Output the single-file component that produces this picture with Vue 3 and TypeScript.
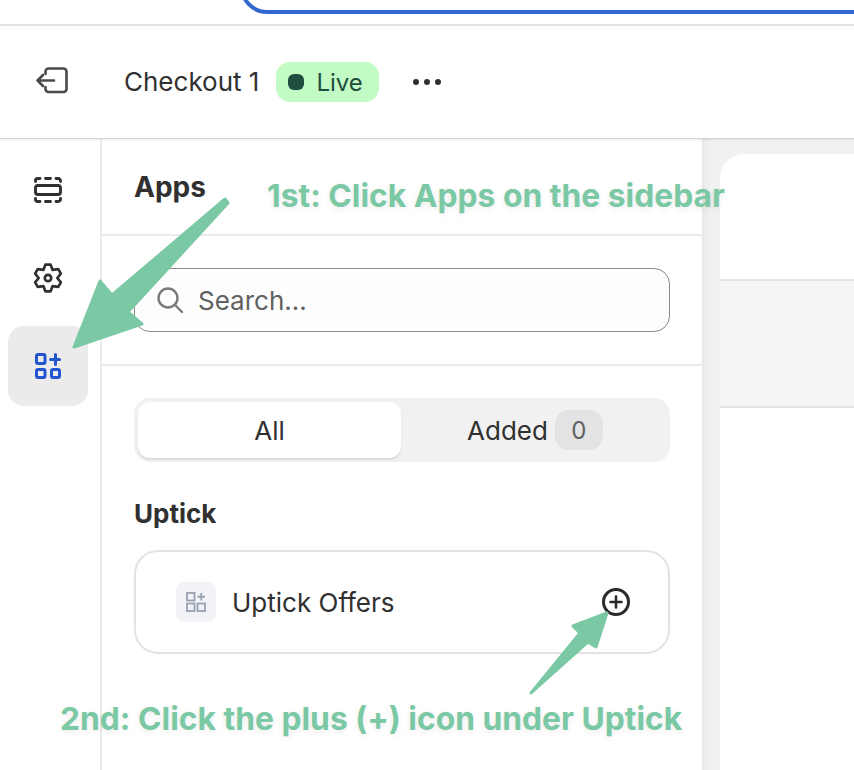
<template>
  <div class="page">
    <div class="top-strip">
      <div class="blue-box"></div>
    </div>

    <header class="header">
      <svg class="exit-icon" width="34" height="28" viewBox="0 0 34 28" fill="none" stroke="#4a4a4a" stroke-width="2.6" stroke-linecap="round" stroke-linejoin="round">
        <path d="M10.500 8V5.500a3 3 0 0 1 3-3h15a3 3 0 0 1 3 3V23a3 3 0 0 1-3 3h-15a3 3 0 0 1-3-3v-2" />
        <path d="M19 14.500H2.500M8 9l-5.500 5.500L8 20" />
      </svg>
      <span class="title">Checkout 1</span>
      <span class="badge"><i class="dot"></i>Live</span>
      <span class="dots"><i></i><i></i><i></i></span>
    </header>

    <div class="body">
      <nav class="rail">
        <button class="rail-btn">
          <svg width="28" height="26" viewBox="0 0 28 26" fill="none" stroke="#303030" stroke-width="2.900" stroke-linecap="round" stroke-linejoin="round">
            <rect x="1.500" y="8.500" width="25" height="9" rx="2.500" />
            <path d="M1.500 4.500V3.800A2.300 2.300 0 0 1 3.800 1.500H6M11.500 1.500h5M22 1.500h2.200a2.300 2.300 0 0 1 2.300 2.300v.7M1.500 21.500v.7a2.300 2.300 0 0 0 2.300 2.300H6M11.500 24.500h5M22 24.500h2.200a2.300 2.300 0 0 0 2.300-2.300v-.7" />
          </svg>
        </button>
        <button class="rail-btn">
          <svg width="32" height="32" viewBox="0 0 32 32" fill="none" stroke="#303030" stroke-width="2.700" stroke-linecap="round" stroke-linejoin="round">
            <circle cx="16" cy="16" r="3.200" />
            <path :d="gearPath" />
          </svg>
        </button>
        <button class="rail-btn active">
          <svg width="26" height="26" viewBox="0 0 26 26" fill="none" stroke="#2256d0" stroke-width="3" stroke-linecap="round" stroke-linejoin="round">
            <rect x="1.500" y="1.500" width="8.500" height="9" rx="1.500" />
            <rect x="1.500" y="16.500" width="8.500" height="8" rx="1.500" />
            <rect x="16.500" y="16.500" width="8" height="8" rx="1.500" />
            <path d="M20.500 1.500v10M15.500 6.500h9" />
          </svg>
        </button>
      </nav>

      <section class="panel">
        <div class="panel-head">Apps</div>

        <div class="panel-search">
          <div class="search">
            <svg width="30" height="30" viewBox="0 0 30 30" fill="none" stroke="#7a7a7a" stroke-width="2.400" stroke-linecap="round">
              <circle cx="13" cy="13" r="9.500" />
              <path d="M20 20l7 7" />
            </svg>
            <span>Search...</span>
          </div>
        </div>

        <div class="panel-content">
          <div class="tabs">
            <div class="tab selected">All</div>
            <div class="tab added">Added<span class="count">0</span></div>
          </div>

          <h3 class="group">Uptick</h3>

          <div class="app-card">
            <span class="app-icon">
              <svg width="20" height="20" viewBox="0 0 20 20" fill="none" stroke="#98a2b3" stroke-width="1.800">
                <rect x="1" y="1" width="7.500" height="7.500" />
                <rect x="1" y="11.500" width="7.500" height="7.500" />
                <rect x="11.500" y="11.500" width="7.500" height="7.500" />
                <path d="M15.250 1v7.500M11.500 4.750H19" />
              </svg>
            </span>
            <span class="app-name">Uptick Offers</span>
            <svg width="28" height="28" viewBox="0 0 28 28" fill="none" stroke="#2a2a2a" stroke-linecap="round">
              <circle cx="14" cy="14" r="12.500" stroke-width="3" />
              <path d="M14 8.500v11M8.500 14h11" stroke-width="2.600" />
            </svg>
          </div>
        </div>
      </section>

      <section class="preview">
        <div class="preview-card">
          <div class="preview-top"></div>
          <div class="preview-mid"></div>
          <div class="preview-bottom"></div>
        </div>
      </section>
    </div>

    <!-- annotations drawn over the screenshot -->
    <svg class="arrows" width="854" height="770" viewBox="0 0 854 770" fill="#7bc8a4" stroke="#7bc8a4" stroke-width="3" stroke-linejoin="round">
      <polygon points="225,199 228,203 128,312 142,324 74,347 100,281 112,295" />
      <polygon points="607,613 573,626 580,633 531,693 588,642 596,647" />
    </svg>
    <span class="note note-1">1st: Click Apps on the sidebar</span>
    <span class="note note-2">2nd: Click the plus (+) icon under Uptick</span>
  </div>
</template>

<script setup lang="ts">
// six tooth gear outline, tooth on top
function buildGear(cx: number, cy: number, outer: number, inner: number): string {
  const pts: string[] = [];
  const at = (deg: number, r: number) => {
    const rad = (deg * Math.PI) / 180;
    return `${(cx + r * Math.cos(rad)).toFixed(2)} ${(cy + r * Math.sin(rad)).toFixed(2)}`;
  };
  for (let k = 0; k < 6; k++) {
    const a = -90 + k * 60;
    pts.push(at(a - 11, outer), at(a + 11, outer), at(a + 30, inner));
  }
  return `M${pts.join('L')}Z`;
}

const gearPath = buildGear(16, 16, 13.6, 9.3);
</script>

<style>
html,
body {
  margin: 0;
  background: #fff;
}
</style>

<style scoped>
.page {
  position: relative;
  width: 854px;
  height: 770px;
  overflow: hidden;
  display: flex;
  flex-direction: column;
  background: #fff;
  font-family: Inter, 'Liberation Sans', sans-serif;
  color: #303030;
}

.top-strip {
  height: 24px;
  flex: none;
  overflow: hidden;
  border-bottom: 2px solid #e3e3e3;
}
.blue-box {
  margin-left: 240px;
  margin-top: -40px;
  height: 46px;
  width: 700px;
  border: 4px solid #3068cf;
  border-radius: 28px;
}

.header {
  height: 113px;
  box-sizing: border-box;
  flex: none;
  display: flex;
  align-items: center;
  padding-left: 35px;
  border-bottom: 1px solid #d4d4d4;
  box-shadow: 0 1px 2px rgba(0, 0, 0, 0.08);
  position: relative;
  z-index: 1;
}
.exit-icon {
  margin: 0 55px 4px 0;
}
.title {
  font-size: 26px;
  margin: 0 17px 2px 0;
}
.badge {
  display: inline-flex;
  align-items: center;
  height: 40px;
  padding: 0 16px 0 12px;
  border-radius: 14px;
  background: #c2fcc4;
  color: #1f4d40;
  font-size: 24px;
}
.dot {
  width: 16px;
  height: 16px;
  border-radius: 6px;
  background: #1f4d40;
  margin-right: 12px;
}
.dots {
  display: inline-flex;
  gap: 5px;
  margin-left: 34px;
}
.dots i {
  width: 6px;
  height: 6px;
  border-radius: 50%;
  background: #303030;
}

.body {
  flex: 1;
  min-height: 0;
  display: flex;
}

.rail {
  width: 102px;
  flex: none;
  box-sizing: border-box;
  border-right: 2px solid #ebebeb;
  display: flex;
  flex-direction: column;
  align-items: flex-start;
  gap: 8px;
  padding: 11px 0 0 8px;
}
.rail-btn {
  width: 80px;
  height: 80px;
  border: 0;
  background: none;
  padding: 0;
  border-radius: 16px;
  display: flex;
  align-items: center;
  justify-content: center;
}
.rail-btn.active {
  background: #ebebeb;
}

.panel {
  width: 600px;
  flex: none;
}
.panel-head {
  height: 97px;
  box-sizing: border-box;
  padding: 31px 0 0 32px;
  font-size: 28px;
  font-weight: 700;
  line-height: 34px;
  border-bottom: 2px solid #ebebeb;
}
.panel-search {
  padding: 32px;
  border-bottom: 2px solid #ebebeb;
}
.search {
  height: 64px;
  box-sizing: border-box;
  border: 1px solid #8a8a8a;
  border-radius: 16px;
  background: #fdfdfd;
  display: flex;
  align-items: center;
  gap: 13px;
  padding-left: 20px;
  color: #616161;
  font-size: 26px;
}
.panel-content {
  padding: 32px 32px 0;
}
.tabs {
  height: 64px;
  box-sizing: border-box;
  padding: 4px;
  border-radius: 16px;
  background: #f1f1f1;
  display: grid;
  grid-template-columns: 263px 1fr;
}
.tab {
  display: flex;
  align-items: center;
  justify-content: center;
  font-size: 26px;
  border-radius: 12px;
}
.tab.selected {
  background: #fff;
  box-shadow: 0 2px 2px rgba(0, 0, 0, 0.1);
}
.tab.added {
  padding-left: 3px;
}
.count {
  margin-left: 7px;
  min-width: 48px;
  height: 40px;
  border-radius: 14px;
  background: #e3e3e3;
  color: #616161;
  font-size: 24px;
  display: flex;
  align-items: center;
  justify-content: center;
}
.group {
  margin: 36px 0 20px;
  font-size: 26px;
  font-weight: 700;
  line-height: 32px;
}
.app-card {
  height: 104px;
  box-sizing: border-box;
  border: 2px solid #e3e3e3;
  border-radius: 24px;
  display: flex;
  align-items: center;
  padding: 0 38px 0 40px;
}
.app-icon {
  width: 40px;
  height: 40px;
  border-radius: 8px;
  background: #f1f3f6;
  display: flex;
  align-items: center;
  justify-content: center;
  margin-right: 16px;
}
.app-name {
  font-size: 26px;
  flex: 1;
}

.preview {
  flex: 1;
  background: #f1f1f1;
  padding: 15px 0 0 18px;
  box-shadow: inset 8px 0 8px -8px rgba(0, 0, 0, 0.08);
}
.preview-card {
  height: 100%;
  background: #fff;
  border-radius: 24px 0 0 0;
  display: flex;
  flex-direction: column;
}
.preview-top {
  height: 125px;
  border-bottom: 2px solid #e3e3e3;
}
.preview-mid {
  height: 125px;
  background: #f5f5f5;
  border-bottom: 2px solid #e3e3e3;
}
.preview-bottom {
  flex: 1;
}

.arrows {
  position: absolute;
  left: 0;
  top: 0;
  z-index: 2;
  pointer-events: none;
}
.note {
  position: absolute;
  z-index: 3;
  font-weight: 700;
  font-size: 31.8px;
  line-height: 36px;
  color: #7bc8a4;
  white-space: nowrap;
  text-shadow: 0 2px 6px rgba(0, 0, 0, 0.08);
}
.note-1 {
  left: 267px;
  top: 178px;
}
.note-2 {
  left: 60px;
  top: 701px;
}
</style>
